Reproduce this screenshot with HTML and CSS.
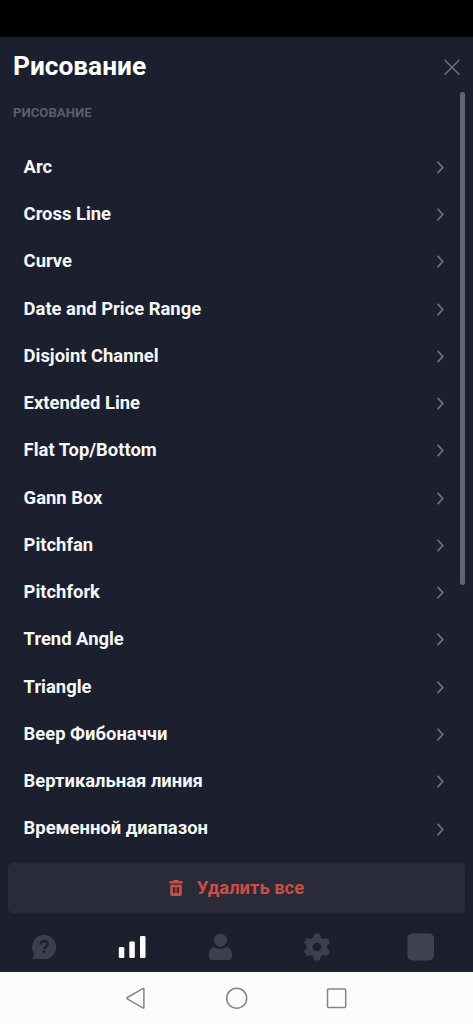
FILE: index.html
```html
<!DOCTYPE html>
<html lang="ru">
<head>
<meta charset="utf-8">
<title>Рисование</title>
<link rel="stylesheet" href="styles.css">
</head>
<body>
<div class="screen">
  <div class="status-bar"></div>
  <header class="header">
    <h1 class="title">Рисование</h1>
    <svg class="close" viewBox="0 0 18 18"><path d="M2 2.300l14 14M16 2.300l-14 14"/></svg>
  </header>
  <main class="content">
    <div class="panel">
      <h2 class="section">РИСОВАНИЕ</h2>
      <ul class="list">
        <li class="item"><span>Arc</span><svg class="chevron" viewBox="0 0 8 14"><path d="M2 2.300L6.700 7.500 2 12.700"/></svg></li>
        <li class="item"><span>Cross Line</span><svg class="chevron" viewBox="0 0 8 14"><path d="M2 2.300L6.700 7.500 2 12.700"/></svg></li>
        <li class="item"><span>Curve</span><svg class="chevron" viewBox="0 0 8 14"><path d="M2 2.300L6.700 7.500 2 12.700"/></svg></li>
        <li class="item"><span>Date and Price Range</span><svg class="chevron" viewBox="0 0 8 14"><path d="M2 2.300L6.700 7.500 2 12.700"/></svg></li>
        <li class="item"><span>Disjoint Channel</span><svg class="chevron" viewBox="0 0 8 14"><path d="M2 2.300L6.700 7.500 2 12.700"/></svg></li>
        <li class="item"><span>Extended Line</span><svg class="chevron" viewBox="0 0 8 14"><path d="M2 2.300L6.700 7.500 2 12.700"/></svg></li>
        <li class="item"><span>Flat Top/Bottom</span><svg class="chevron" viewBox="0 0 8 14"><path d="M2 2.300L6.700 7.500 2 12.700"/></svg></li>
        <li class="item"><span>Gann Box</span><svg class="chevron" viewBox="0 0 8 14"><path d="M2 2.300L6.700 7.500 2 12.700"/></svg></li>
        <li class="item"><span>Pitchfan</span><svg class="chevron" viewBox="0 0 8 14"><path d="M2 2.300L6.700 7.500 2 12.700"/></svg></li>
        <li class="item"><span>Pitchfork</span><svg class="chevron" viewBox="0 0 8 14"><path d="M2 2.300L6.700 7.500 2 12.700"/></svg></li>
        <li class="item"><span>Trend Angle</span><svg class="chevron" viewBox="0 0 8 14"><path d="M2 2.300L6.700 7.500 2 12.700"/></svg></li>
        <li class="item"><span>Triangle</span><svg class="chevron" viewBox="0 0 8 14"><path d="M2 2.300L6.700 7.500 2 12.700"/></svg></li>
        <li class="item"><span>Веер Фибоначчи</span><svg class="chevron" viewBox="0 0 8 14"><path d="M2 2.300L6.700 7.500 2 12.700"/></svg></li>
        <li class="item"><span>Вертикальная линия</span><svg class="chevron" viewBox="0 0 8 14"><path d="M2 2.300L6.700 7.500 2 12.700"/></svg></li>
        <li class="item"><span>Временной диапазон</span><svg class="chevron" viewBox="0 0 8 14"><path d="M2 2.300L6.700 7.500 2 12.700"/></svg></li>
      </ul>
    </div>
    <div class="scroll-thumb"></div>
  </main>
  <button class="delete">
    <svg class="trash" viewBox="0 0 14 16"><path fill-rule="evenodd" d="M4.500 0h5v1H13.700v2.500H.3V1h4.200zM1.200 4.800h11.600v9.200q0 2-2 2H3.200q-2 0-2-2zM4 7.300v5.700h2.300V7.300zM7.700 7.300v5.700H10V7.300z"/></svg>
    <span class="delete-label">Удалить все</span>
  </button>
  <nav class="tabs">
    <svg class="tab" viewBox="0 0 28 28"><path d="M14.200 2a12 12 0 1 1 0 24H2.400l1.800-5.300A12 12 0 0 1 14.200 2z"/><path class="question" d="M10.800 11.500c0-4.700 6.800-4.600 6.800-.6 0 2.700-3.300 2.700-3.300 5.300M14.300 17.800v2.400"/></svg>
    <svg class="tab active" viewBox="0 0 28 28"><rect x=".8" y="14" width="5.500" height="11" rx="1.200"/><rect x="11.300" y="8.500" width="5.500" height="16.500" rx="1.200"/><rect x="22" y="3" width="5.500" height="22" rx="1.200"/></svg>
    <svg class="tab" viewBox="0 0 28 28"><circle cx="14.400" cy="7.200" r="6.500"/><path d="M7.900 14c2 1.300 4.200 2 6.500 2s4.500-.7 6.500-2c3.200.6 5 3.700 5 7v2.500q0 3.500-3.500 3.500h-16q-3.500 0-3.500-3.500V21c0-3.300 1.800-6.400 5-7z"/></svg>
    <svg class="tab" viewBox="0 0 28 28"><path fill-rule="evenodd" d="M11 1.500Q11.200.5 12.200.5h3.600q1 0 1.200 1l.8 3.300 2.300 1.300 3.200-.9q1-.3 1.500.6l1.800 3.100q.5.900-.2 1.600L24 12.700v2.600l2.400 2.200q.7.700.2 1.600l-1.800 3.100q-.5.900-1.500.6l-3.200-.9-2.300 1.300-.8 3.300q-.2 1-1.200 1h-3.600q-1 0-1.200-1l-.8-3.300-2.300-1.300-3.200.9q-1 .3-1.500-.6l-1.800-3.100q-.5-.9.2-1.600L4 15.300v-2.600l-2.400-2.200q-.7-.7-.2-1.600l1.800-3.100q.5-.9 1.500-.6l3.200.9 2.300-1.300zM14 9.700a4.300 4.300 0 1 0 0 8.600 4.300 4.300 0 0 0 0-8.600z"/></svg>
    <svg class="tab" viewBox="0 0 28 28"><rect class="tile" x=".5" y=".5" width="26.500" height="27" rx="5"/></svg>
  </nav>
  <footer class="system-nav">
    <svg class="key" viewBox="0 0 24 24"><path d="M17.800 2.600Q18.900 2 18.900 3.200V21.300Q18.900 22.500 17.800 21.900L2.300 12.900Q1.300 12.200 2.300 11.500z"/></svg>
    <svg class="key" viewBox="0 0 24 24"><circle cx="11.700" cy="12.200" r="10"/></svg>
    <svg class="key" viewBox="0 0 24 24"><rect x="2.500" y="3" width="18.200" height="18.400" rx="1"/></svg>
  </footer>
</div>
</body>
</html>
```
FILE: styles.css
```css
* { box-sizing: border-box; }
body { margin: 0; background: #1c202e; font-family: Roboto, "Liberation Sans", sans-serif; }
.screen { width: 473px; height: 1024px; display: flex; flex-direction: column; background: #1c202e; overflow: hidden; }
.status-bar { height: 37px; background: #000; flex: none; }
.header { height: 55px; flex: none; display: flex; align-items: center; justify-content: space-between; padding: 3px 12.500px 0 13px; }
.title { margin: 0; font-size: 26.250px; line-height: 32px; font-weight: 700; color: #fff; }
.close { width: 18px; height: 18px; margin-top: 2px; fill: none; stroke: #70737c; stroke-width: 1.500; stroke-linecap: round; }
.content { height: 771px; flex: none; display: flex; justify-content: space-between; padding-right: 8px; }
.panel { width: 445px; }
.section { margin: 0; padding: 13px 0 0 13px; font-size: 13.200px; line-height: 16px; font-weight: 700; color: #5a5e68; }
.list { list-style: none; margin: 0; padding: 22.200px 0 0 23.600px; }
.item { height: 47.27px; display: flex; align-items: center; justify-content: space-between; font-size: 18.400px; line-height: 21px; font-weight: 700; color: #f6f7f9; white-space: nowrap; }
.item span { margin-top: -1.200px; }
.chevron { width: 8px; height: 14px; margin-right: 1px; fill: none; stroke: #71747d; stroke-width: 1.700; stroke-linecap: round; }
.scroll-thumb { width: 5px; height: 493px; border-radius: 3px; background: #636670; }
.delete { height: 50px; flex: none; margin: 0 8px; padding: 0; border: 0; border-radius: 5px; background: #292b38; color: #ce4d42; font: 700 18.400px Roboto, "Liberation Sans", sans-serif; display: flex; align-items: center; justify-content: center; gap: 14px; }
.delete-label { margin-top: -2px; }
.trash { width: 14px; height: 16px; fill: currentColor; }
.tabs { height: 59px; flex: none; display: grid; grid-template-columns: 88px 88px 88px 106px 101px; align-items: center; justify-items: center; padding-top: 9px; }
.tab { width: 28px; height: 28px; fill: #3c404c; }
.tab.active { fill: #fff; }
.question { fill: none; stroke: #1c202e; stroke-width: 2.400; }
.tile { fill: #41424f; }
.system-nav { height: 52px; background: #fcfcfc; display: flex; justify-content: center; gap: 76px; align-items: center; }
.key { width: 24px; height: 24px; fill: none; stroke: #85858a; stroke-width: 1.500; }
```
